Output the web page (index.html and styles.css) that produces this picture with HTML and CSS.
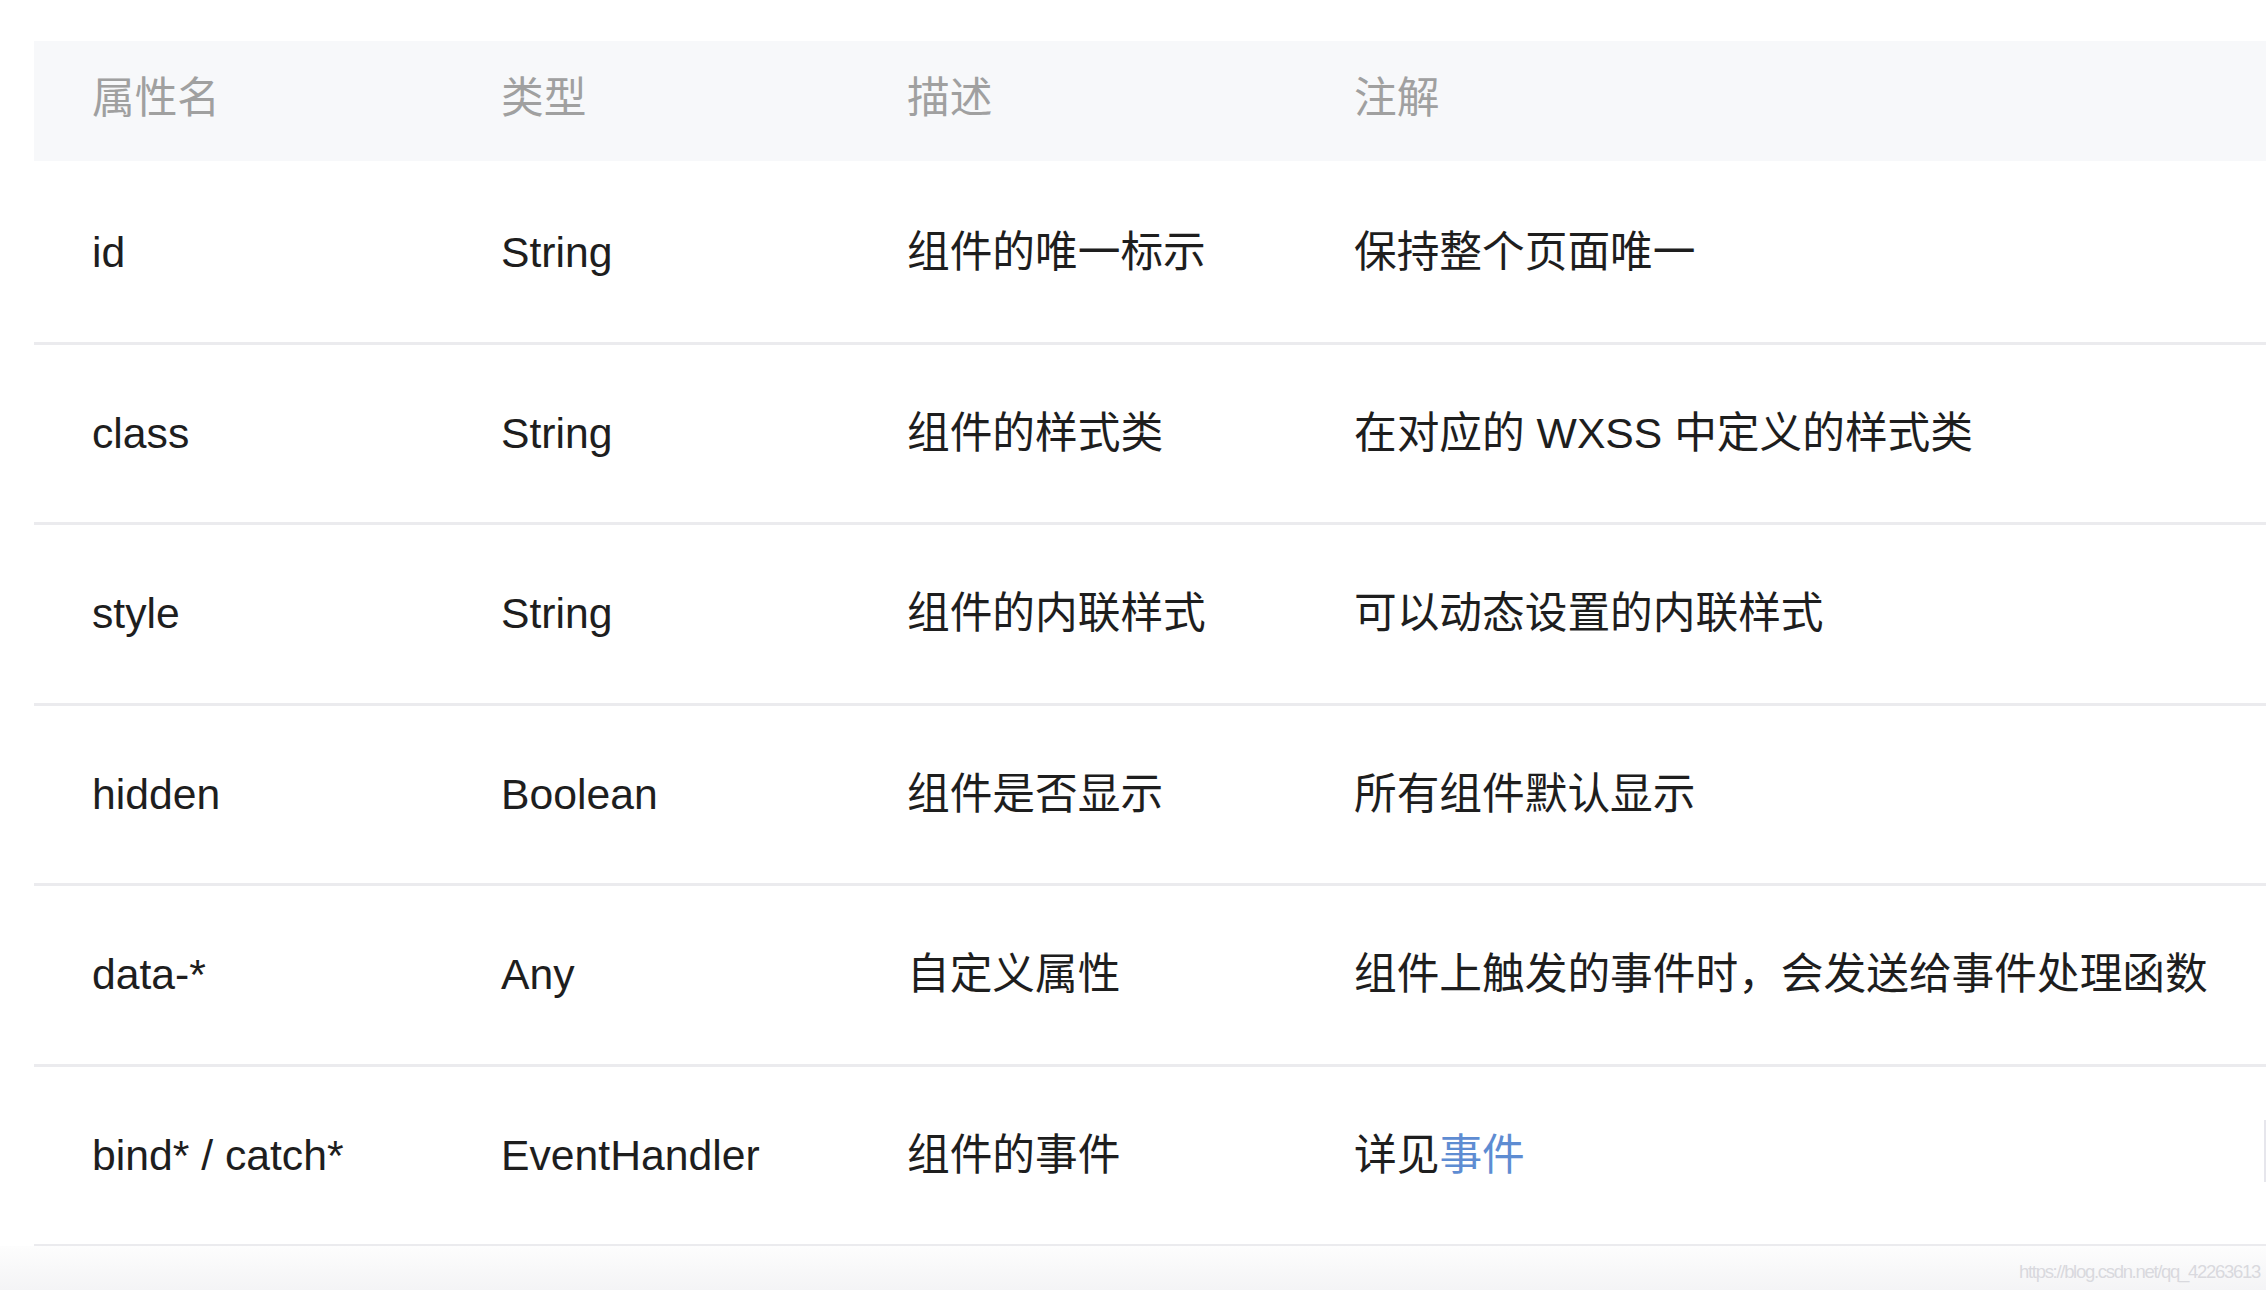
FILE: index.html
```html
<!DOCTYPE html>
<html lang="zh-CN">
<head>
<meta charset="utf-8">
<title>组件属性</title>
<link rel="stylesheet" href="styles.css">
</head>
<body>
<div class="page">
  <div class="table">
    <div class="row head">
      <div class="cell">属性名</div>
      <div class="cell">类型</div>
      <div class="cell">描述</div>
      <div class="cell">注解</div>
    </div>
    <div class="row first">
      <div class="cell">id</div>
      <div class="cell">String</div>
      <div class="cell">组件的唯一标示</div>
      <div class="cell">保持整个页面唯一</div>
    </div>
    <div class="row">
      <div class="cell">class</div>
      <div class="cell">String</div>
      <div class="cell">组件的样式类</div>
      <div class="cell">在对应的 WXSS 中定义的样式类</div>
    </div>
    <div class="row">
      <div class="cell">style</div>
      <div class="cell">String</div>
      <div class="cell">组件的内联样式</div>
      <div class="cell">可以动态设置的内联样式</div>
    </div>
    <div class="row">
      <div class="cell">hidden</div>
      <div class="cell">Boolean</div>
      <div class="cell">组件是否显示</div>
      <div class="cell">所有组件默认显示</div>
    </div>
    <div class="row">
      <div class="cell">data-*</div>
      <div class="cell">Any</div>
      <div class="cell">自定义属性</div>
      <div class="cell">组件上触发的事件时，会发送给事件处理函数</div>
    </div>
    <div class="row">
      <div class="cell">bind* / catch*</div>
      <div class="cell">EventHandler</div>
      <div class="cell">组件的事件</div>
      <div class="cell">详见<a class="link" href="#">事件</a></div>
    </div>
  </div>
  <div class="footer">
    <span class="watermark">https://blog.csdn.net/qq_42263613</span>
  </div>
  <div class="edge"></div>
</div>
</body>
</html>
```

FILE: styles.css
```css
html, body {
  margin: 0;
  padding: 0;
  background: #ffffff;
}

.page {
  position: relative;
  width: 2266px;
  height: 1290px;
  overflow: hidden;
  padding-top: 41px;
  box-sizing: border-box;
  font-family: "Liberation Sans", "Noto Sans CJK SC", sans-serif;
  font-size: 42.7px;
  color: #1e1e1e;
}

.table {
  margin-left: 34px;
}

.row {
  display: grid;
  grid-template-columns: 409px 406px 447px 1fr;
  align-items: center;
  height: 180.5px;
  box-sizing: border-box;
  border-bottom: 3px solid #ebebee;
}

.row.first {
  height: 183.5px;
  padding-top: 3px;
}

.row.head {
  height: 120px;
  background: #f7f8fa;
  border-bottom: none;
  color: #a0a0a0;
}

.row.head .cell {
  padding-bottom: 6px;
}

.cell {
  padding-left: 58px;
  white-space: nowrap;
  line-height: 1;
}

.link {
  color: #5e8cd2;
  text-decoration: none;
}

.footer {
  height: 44px;
  background: linear-gradient(#fdfdfd, #f4f4f6);
  display: flex;
  justify-content: flex-end;
  align-items: center;
  padding-right: 6px;
  margin-top: -1px;
}

.watermark {
  font-family: "Liberation Sans", sans-serif;
  font-size: 18.5px;
  letter-spacing: -1.3px;
  color: #d9d9de;
  padding-top: 8px;
}

.edge {
  position: absolute;
  right: 0;
  top: 1120px;
  width: 2px;
  height: 62px;
  background: #e6e6ec;
}
```
